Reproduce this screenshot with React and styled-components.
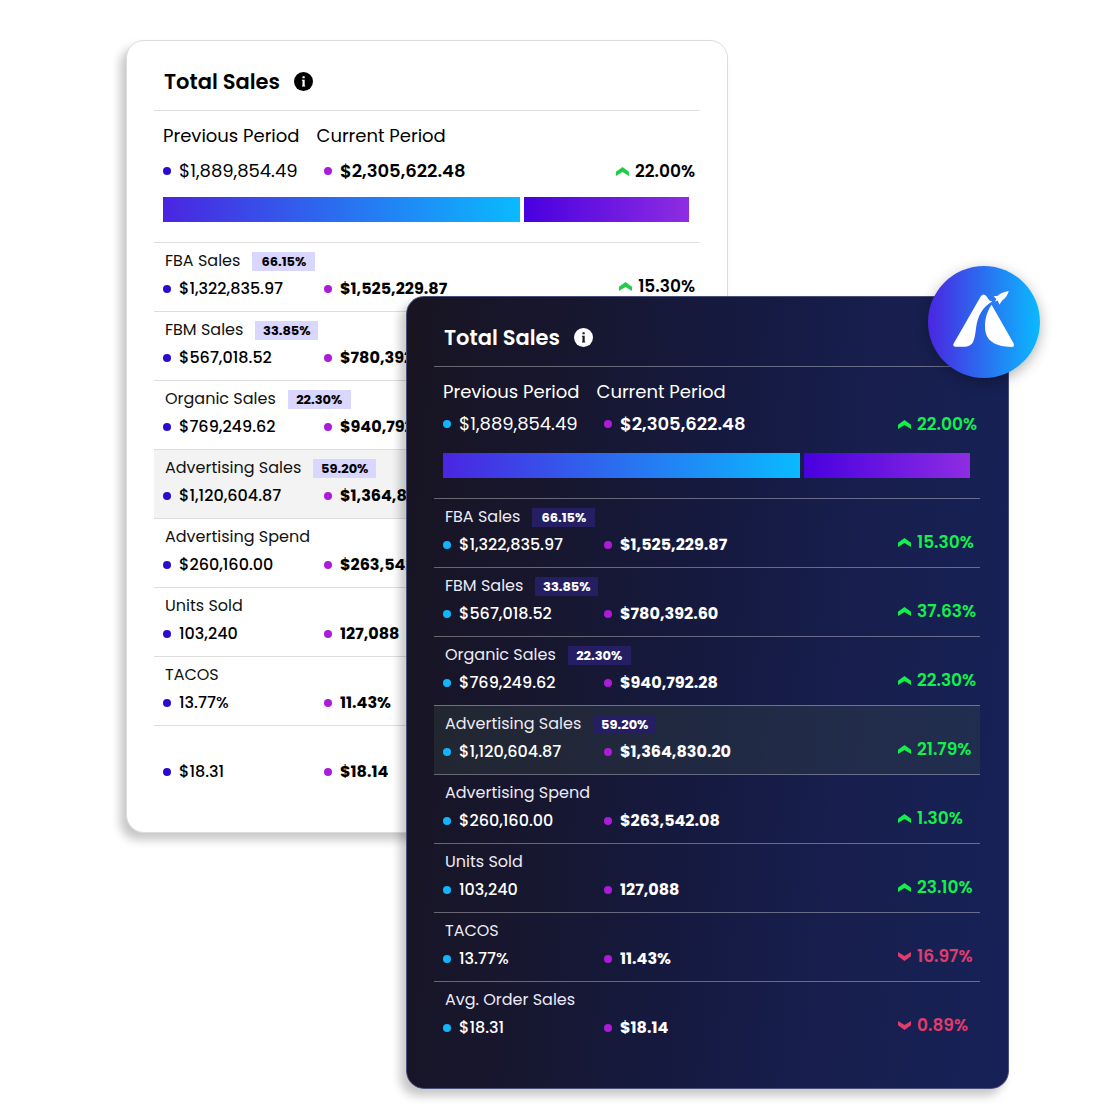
import React from 'react';
import styled, { createGlobalStyle, ThemeProvider } from 'styled-components'

const GlobalStyle = createGlobalStyle`
    *{
        box-sizing: border-box;
    }
    body{
        margin: 0;
        background: #fff;
        font-family: Poppins, Inter, "Liberation Sans", sans-serif;
    }
`

const light = {
    background: '#fff',
    border: '#dcdcdc',
    line: '#dedede',
    text: '#000',
    label: '#111',
    previous: '#2a0bd0',
    chip: '#d9d6ff',
    active: '#f3f3f3',
    up: '#22cc4a',
    down: '#e23b68',
    change: '#000',
    changeAlign: 'flex-end',
    totalsPadding: '7px 0 12px',
}

const dark = {
    background: 'linear-gradient(95deg, #181421 0%, #171731 28%, #151a42 52%, #181f4e 72%, #172157 100%)',
    border: '#4b5078',
    line: 'rgba(255, 255, 255, 0.35)',
    text: '#fff',
    label: '#ecebf5',
    previous: '#12b5fb',
    chip: '#261e62',
    active: 'rgba(52, 70, 70, 0.36)',
    up: '#12f04c',
    down: '#e03c6c',
    changeAlign: 'flex-start',
    totalsPadding: '4px 0 15px',
}

const summary = { previous: '$1,889,854.49', current: '$2,305,622.48', change: '22.00%' }

const metrics = [
    { label: 'FBA Sales', share: '66.15%', previous: '$1,322,835.97', current: '$1,525,229.87', change: '15.30%' },
    { label: 'FBM Sales', share: '33.85%', previous: '$567,018.52', current: '$780,392.60', change: '37.63%' },
    { label: 'Organic Sales', share: '22.30%', previous: '$769,249.62', current: '$940,792.28', change: '22.30%' },
    { label: 'Advertising Sales', share: '59.20%', previous: '$1,120,604.87', current: '$1,364,830.20', change: '21.79%', active: true },
    { label: 'Advertising Spend', previous: '$260,160.00', current: '$263,542.08', change: '1.30%' },
    { label: 'Units Sold', previous: '103,240', current: '127,088', change: '23.10%' },
    { label: 'TACOS', previous: '13.77%', current: '11.43%', change: '16.97%', down: true },
    { label: 'Avg. Order Sales', previous: '$18.31', current: '$18.14', change: '0.89%', down: true },
]

// the front card covers the change column below the first row
const backMetrics = metrics.map((item, i) => ({
    ...item,
    label: i === metrics.length - 1 ? '' : item.label,
    change: i === 0 ? item.change : null,
}))

const Change = ({ value, down }) => (
    <ChangeBox $down={down}>
        <svg width="13" height="9" viewBox="0 0 12 9" preserveAspectRatio="none" aria-hidden="true">
            <path d={down ? 'M0 0 6 4 12 0V4.3L6 9 0 4.3Z' : 'M0 9 6 5 12 9V4.7L6 0 0 4.7Z'} />
        </svg>
        <span>{value}</span>
    </ChangeBox>
)

const Logo = () => (
    <LogoBadge>
        <svg viewBox="0 0 112 112" role="img" aria-label="Logo">
            <path d="M53 30Q55.500 26.800 58.300 30L61.200 34.200 64.200 35.500C54.500 41 49.800 50 48.200 61 46.500 74 46 80.800 35.500 80.800H27Q24.400 80.200 25.700 77.500Z" />
            <path d="M63.600 38.800 85.700 77.500Q86.800 81.200 83.500 81C68 80.500 57.400 75.500 57 61.500 56.800 52 59.500 45 63.600 38.800Z" />
            <path d="M80.800 25C75 26 71.500 27.700 69.300 30L65.600 30.200 68.400 33 67 35.600 69.700 34.600 71.400 38.600 74.200 34.600C77.200 32.500 79.500 29.500 80.800 25Z" />
        </svg>
    </LogoBadge>
)

const SalesCard = ({ theme, items, className, children }) => (
    <ThemeProvider theme={theme}>
        <Card className={className}>
            <Header>
                <Title>Total Sales</Title>
                <InfoButton type="button" aria-label="About total sales">
                    <svg viewBox="0 0 19 19" aria-hidden="true">
                        <circle className="disc" cx="9.500" cy="9.500" r="9.500" />
                        <path className="mark" d="M8.500 4.200h2.200v2H8.500zM7.900 7.700h2.800v5.800h.5v1H8v-1h.5V8.800h-.6z" />
                    </svg>
                </InfoButton>
            </Header>
            <Summary>
                <Periods>
                    <span>Previous Period</span>
                    <span>Current Period</span>
                </Periods>
                <Totals>
                    <Value>{summary.previous}</Value>
                    <Value $current $weight={600}>{summary.current}</Value>
                    <Change value={summary.change} />
                </Totals>
                <Bars>
                    <Bar $grow={356} $from="#4a25e1" $to="#0abaff" />
                    <Bar $grow={165} $from="#4800df" $to="#8e2de2" />
                </Bars>
            </Summary>
            <Table>
                <tbody>
                    {items.map(item => (
                        <Row key={item.previous} $active={item.active}>
                            <Label scope="row">
                                <span>{item.label}</span>
                                {item.share && <Chip>{item.share}</Chip>}
                            </Label>
                            <td><Value $weight={500}>{item.previous}</Value></td>
                            <td><Value $current $weight={700}>{item.current}</Value></td>
                            <td>{item.change && <Change value={item.change} down={item.down} />}</td>
                        </Row>
                    ))}
                </tbody>
            </Table>
            {children}
        </Card>
    </ThemeProvider>
)

const App = () => (
    <Page>
        <GlobalStyle />
        <SalesCard className='back' theme={light} items={backMetrics} />
        <SalesCard className='front' theme={dark} items={metrics}>
            <Logo />
        </SalesCard>
    </Page>
);

export default App;

const Page = styled.main`
    display: grid;
    grid-template-columns: 280fr 322fr 281fr;
    grid-template-rows: 256px auto;
    align-items: start;
    padding: 40px 111px 32px 126px;
    .back{
        grid-area: 1 / 1 / 3 / 3;
    }
    .front{
        grid-area: 2 / 2 / 3 / 4;
    }
`

const Card = styled.section`
    position: relative;
    padding: 0 28px 38px 27px;
    border: 1px solid ${p => p.theme.border};
    border-radius: 18px;
    background: ${p => p.theme.background};
    background-origin: border-box;
    box-shadow: -6px 7px 10px rgba(0, 0, 0, 0.22);
    color: ${p => p.theme.text};
`

const Header = styled.header`
    display: flex;
    align-items: center;
    gap: 14px;
    height: 70px;
    padding: 12px 10px 0;
    border-bottom: 1px solid ${p => p.theme.line};
`

const Title = styled.h2`
    margin: 0;
    font-size: 21px;
    line-height: 32px;
    font-weight: 600;
`

const InfoButton = styled.button`
    display: flex;
    width: 19px;
    height: 19px;
    padding: 0;
    border: 0;
    background: none;
    cursor: pointer;
    .disc{
        fill: ${p => p.theme.text};
    }
    .mark{
        fill: ${p => p.theme.text === '#fff' ? '#18172f' : '#fff'};
    }
`

const Summary = styled.div`
    padding: 11px 4px 20px 9px;
`

const Periods = styled.div`
    display: flex;
    gap: 17px;
    font-size: 18px;
    line-height: 28px;
`

const Totals = styled.div`
    display: grid;
    grid-template-columns: 161px 1fr 78px;
    align-items: center;
    padding: ${p => p.theme.totalsPadding};
    font-size: 18px;
    line-height: 28px;
`

const Value = styled.span`
    display: flex;
    align-items: center;
    gap: 8px;
    font-weight: ${p => p.$weight || 400};
    &::before{
        content: "";
        width: 8px;
        height: 8px;
        border-radius: 50%;
        background: ${p => p.$current ? '#ac1bd8' : p.theme.previous};
    }
`

const ChangeBox = styled.span`
    display: flex;
    align-items: center;
    justify-content: ${p => p.theme.changeAlign};
    gap: 6px;
    font-size: 17px;
    line-height: 22px;
    font-weight: 600;
    white-space: nowrap;
    color: ${p => p.theme.change || (p.$down ? p.theme.down : p.theme.up)};
    svg{
        flex: none;
        fill: ${p => p.$down ? p.theme.down : p.theme.up};
    }
`

const Bars = styled.div`
    display: flex;
    gap: 4px;
    margin-right: 6px;
`

const Bar = styled.div`
    flex: ${p => p.$grow} 1 0;
    height: 25px;
    background: linear-gradient(90deg, ${p => p.$from}, ${p => p.$to});
`

const Table = styled.table`
    display: block;
    tbody{
        display: block;
    }
`

const Row = styled.tr`
    display: grid;
    grid-template-columns: 161px 1fr 78px;
    align-content: start;
    height: 69px;
    padding: 4px 4px 0 9px;
    border-top: 1px solid ${p => p.theme.line};
    background: ${p => p.$active ? p.theme.active : 'none'};
    font-size: 16px;
    line-height: 28px;
    td{
        padding: 0;
    }
`

const Label = styled.th`
    grid-column: 1 / -1;
    display: flex;
    align-items: center;
    gap: 12px;
    height: 28px;
    padding: 0 0 0 2px;
    font-weight: 400;
    color: ${p => p.theme.label};
`

const Chip = styled.span`
    width: 63px;
    background: ${p => p.theme.chip};
    font-size: 13px;
    line-height: 19px;
    font-weight: 700;
    text-align: center;
    color: ${p => p.theme.text};
`

const LogoBadge = styled.div`
    position: absolute;
    top: -31px;
    right: -32px;
    width: 112px;
    height: 112px;
    border-radius: 50%;
    background: linear-gradient(90deg, #4a25e1, #0abaff);
    box-shadow: 0 4px 14px rgba(0, 0, 0, 0.3);
    svg{
        display: block;
        fill: #fff;
    }
`
